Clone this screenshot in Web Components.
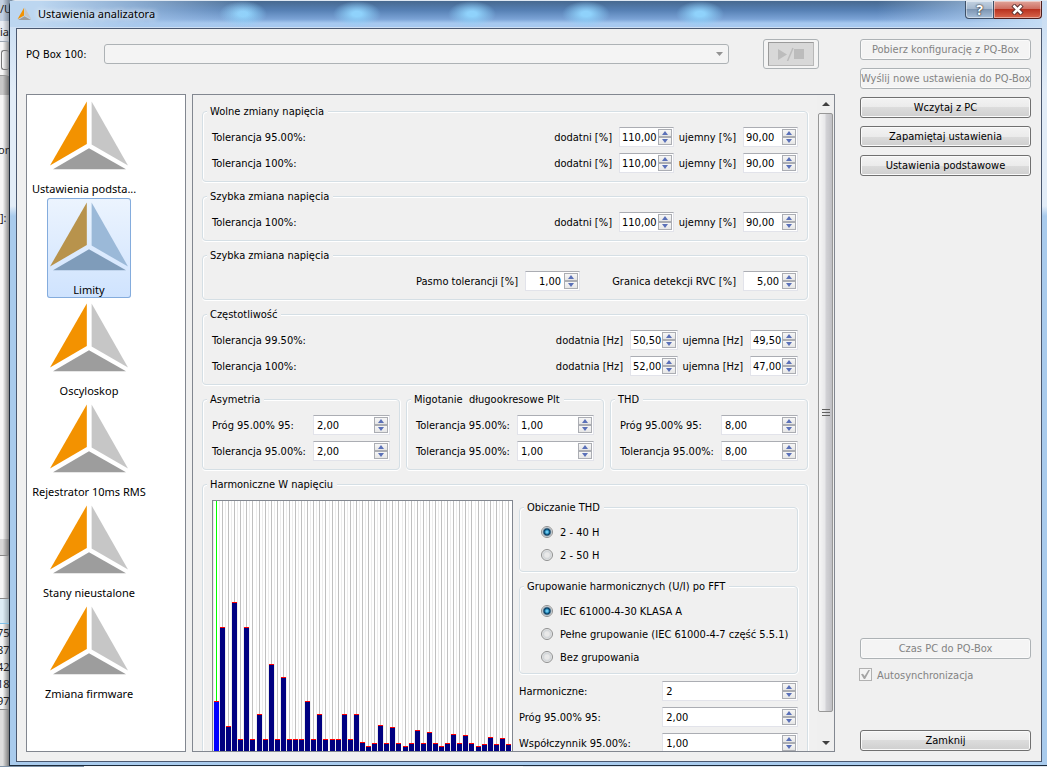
<!DOCTYPE html>
<html lang="pl">
<head>
<meta charset="utf-8">
<title>Ustawienia analizatora</title>
<style>
  html, body { margin: 0; height: 100%; }
  body {
    --ui: "DejaVu Sans Condensed", "DejaVu Sans", sans-serif;
    --shell: "Noto Sans", "Open Sans", sans-serif;
    --face: #f0f0f0;
    font: 11px/14px var(--ui);
    color: #000;
    background: #fff;
    overflow: hidden;
  }
</style>
</head>
<body>
<analyzer-desktop></analyzer-desktop>

<script>
const define = (name, html, setup) => {
  const template = document.createElement('template');
  template.innerHTML = html;
  customElements.define(name, class extends HTMLElement {
    constructor() {
      super();
      this.attachShadow({ mode: 'open' }).append(template.content.cloneNode(true));
    }
    connectedCallback() {
      if (setup && !this.ready) { this.ready = true; setup(this, this.shadowRoot); }
    }
  });
};

/* Three-part triangle used as program logo and page icon */
define('brand-mark', `
<style>
  :host { display: block; }
  svg { display: block; width: 100%; height: auto; }
</style>
<svg viewBox="0 0 84 76" aria-hidden="true">
  <path fill="var(--mark-a, #f39200)" d="M39.8 4.5V47L3 68.5z"/>
  <path fill="var(--mark-b, #c6c6c6)" d="M44.6 4.5V47.6L81 68.5z"/>
  <path fill="var(--mark-c, #9d9d9d)" d="M42 51.3L6 72.2H79z"/>
</svg>`);

define('push-button', `
<style>
  :host { display: block; }
  button {
    display: block; width: 100%; height: 21px; padding: 0; box-sizing: border-box;
    font: inherit; line-height: 19px; color: #000; white-space: nowrap;
    border: 1px solid #707070; border-radius: 3px;
    background: linear-gradient(#f3f3f3, #ebebeb 50%, #dcdcdc 50%, #cfcfcf);
    box-shadow: inset 0 0 0 1px #fafafa;
  }
  button:disabled { color: #838383; border-color: #adb2b5; background: #f4f4f4; }
</style>
<button type="button"><slot></slot></button>`, (el, root) => {
  root.querySelector('button').disabled = el.hasAttribute('disabled');
});

/* Label plus numeric box with up and down arrows */
define('spin-field', `
<style>
  :host {
    display: grid; align-items: center; column-gap: 7px;
    grid-template-columns: var(--label-width, auto) var(--box-width, 55px);
  }
  label { padding-top: 2px; white-space: nowrap; text-align: right; justify-self: end; }
  :host([wide]) { grid-template-columns: 1fr var(--box-width, 77px); column-gap: 0; }
  :host([wide]) label { justify-self: start; }
  .box {
    display: flex; box-sizing: border-box; height: 20px; padding: 1px; background: #fff;
    border: 1px solid #e2e3ea; border-top-color: #abadb3;
  }
  input {
    flex: 1; min-width: 0; width: 0; border: 0; padding: 2px 0 0 1px; background: none;
    font: inherit; color: inherit; outline: 0;
  }
  :host([wide]) input { padding-left: 2px; }
  :host([end]) input { text-align: right; padding-right: 3px; }
  .arrows { display: grid; grid-template-rows: 8px 8px; width: 14px; background: #fff; }
  button {
    display: grid; place-items: center; padding: 0; border: 1px solid #abadb3;
    background: linear-gradient(#f6f6f6, #e6e6e6);
  }
  svg { display: block; fill: #5a70b8; }
</style>
<label for="value"></label>
<span class="box">
  <input id="value" type="text" inputmode="decimal" autocomplete="off">
  <span class="arrows">
    <button type="button" tabindex="-1" aria-label="+"><svg width="6" height="4"><path d="M0 4L3 0L6 4z"/></svg></button>
    <button type="button" tabindex="-1" aria-label="-"><svg width="6" height="4"><path d="M0 0H6L3 4z"/></svg></button>
  </span>
</span>`, (el, root) => {
  const input = root.querySelector('input');
  root.querySelector('label').textContent = el.getAttribute('label');
  input.value = el.getAttribute('value');
  root.querySelectorAll('button').forEach((button, i) => button.addEventListener('click', () => {
    const digits = (input.value.split(',')[1] || '').length;
    const next = parseFloat(input.value.replace(',', '.')) + (i ? -1 : 1);
    input.value = next.toFixed(digits).replace('.', ',');
  }));
});

/* Etched frame with a caption */
define('group-box', `
<style>
  :host { display: block; }
  fieldset {
    margin: 0; min-width: 0; padding: 9px 9px 8px 9px; border: 1px solid #d5dfe5;
    border-radius: 4px; box-shadow: inset 1px 1px #fff, 0 1px #fff, 1px 0 #fff; margin-bottom: 1px;
  }
  legend {
    height: 14px; margin-left: -5px; padding: 0 4px 0 3px; background: var(--face);
    line-height: 16px; white-space: pre;
  }
  .rows { display: grid; row-gap: 6px; }
</style>
<fieldset><legend></legend><div class="rows"><slot></slot></div></fieldset>`, (el, root) => {
  root.querySelector('legend').textContent = el.getAttribute('caption');
});

/* One line of a group: name on the left, value fields on the right */
define('limit-row', `
<style>
  :host { display: flex; align-items: center; gap: 7px; height: 20px; }
  span { flex: 1; padding-top: 2px; }
</style>
<span></span><slot></slot>`, (el, root) => {
  root.querySelector('span').textContent = el.getAttribute('name') || '';
});

define('radio-set', `
<style>
  :host { display: grid; row-gap: 6px; padding-left: 12px; }
  label { display: flex; align-items: center; gap: 7px; height: 17px; white-space: nowrap; }
  span { padding-top: 2px; }
  input {
    appearance: none; flex: none; box-sizing: border-box; width: 12px; height: 12px; margin: 0;
    border: 1px solid #8e8f8f; border-radius: 50%;
    background: radial-gradient(circle, #e9e9e9 0 2px, #cfd3d6 4px, #f4f4f4 5px);
  }
  input:checked {
    background: radial-gradient(circle at 50% 50%, #6cc8ee 0 1px, #1b7fb0 2px, #0b3a5c 3px, #f4f4f4 5px);
  }
</style>`, (el, root) => {
  el.getAttribute('options').split('|').forEach((text, i) => {
    const label = document.createElement('label');
    const input = document.createElement('input');
    const caption = document.createElement('span');
    input.type = 'radio';
    input.name = 'choice';
    input.defaultChecked = i === 0;
    caption.textContent = text;
    label.append(input, caption);
    root.append(label);
  });
});

/* Bars of the harmonic limits, order 2 to 50 */
define('harmonic-chart', `
<style>
  :host { display: block; box-sizing: border-box; border: 1px solid #828790; background: #fff; overflow: hidden; }
  svg { display: block; }
</style>
<svg width="299" height="251" role="img" aria-label="Harmoniczne" shape-rendering="crispEdges"></svg>`, (el, root) => {
  const levels = [51, 125, 26, 150, 13, 125, 13, 38, 13, 88, 13, 75, 13, 13, 13, 51, 13, 38, 13, 13, 13, 38,
    13, 38, 10, 6, 9, 27, 9, 25, 9, 6, 9, 22, 9, 20, 9, 6, 9, 18, 9, 17, 9, 6, 8, 15, 8, 14, 8];
  const rect = (x, y, w, h, fill) => `<rect x="${x}" y="${y}" width="${w}" height="${h}" fill="${fill}"/>`;
  root.querySelector('svg').innerHTML = levels.map((level, i) => {
    const x = 1 + 6 * i + Math.floor((i + 5) / 12);
    const top = 251 - level;
    return rect(x - 1, 0, 1, 251, '#ececec')
      + rect(x + 2, 0, 1, top, i ? '#c0c0c0' : '#00ff00')
      + rect(x, top, 5, level, i ? '#000080' : '#0000ff')
      + rect(x, top, 5, 1, '#ff0000');
  }).join('');
});

define('page-list', `
<style>
  :host {
    display: block; box-sizing: border-box; padding: 2px 0; background: #fff;
    border: 1px solid #828790; font: 11px/16px var(--shell);
  }
  nav { display: grid; width: 124px; row-gap: 1px; }
  button {
    display: grid; grid-template-columns: 84px; justify-content: center; align-content: start;
    height: 100px; padding: 0; border: 0; background: none; font: inherit; color: inherit;
  }
  .tile {
    display: grid; grid-template: 84px 16px / 114px; box-sizing: border-box; height: 100px;
    justify-content: center; border-radius: 3px;
  }
  brand-mark { width: 84px; justify-self: center; }
  .name { white-space: nowrap; text-align: center; }
  .cut { text-align: left; }
  [aria-current] .tile {
    background: linear-gradient(#ecf4fe, #cfe3fe);
    box-shadow: inset 0 0 0 1px #84acdd;
    --mark-a: #b8934c; --mark-b: #9bb9d8; --mark-c: #7f9cba;
  }
</style>
<nav></nav>`, (el, root) => {
  const names = ['Ustawienia podsta...', 'Limity', 'Oscyloskop', 'Rejestrator 10ms RMS', 'Stany nieustalone', 'Zmiana firmware'];
  root.querySelector('nav').innerHTML = names.map((name, i) => `
    <button type="button"${i === 1 ? ' aria-current="page"' : ''}>
      <span class="tile"><brand-mark></brand-mark><span class="name${name.endsWith('...') ? ' cut' : ''}">${name}</span></span>
    </button>`).join('');
});

define('scroll-bar', `
<style>
  :host { display: grid; grid-template-rows: 17px 1fr 17px; width: 17px; background: #efefef; }
  .end { display: grid; place-items: center; }
  .track { display: grid; grid-template-rows: 601fr 16fr; padding: 1px 0 6px 1px; }
  .thumb {
    display: grid; place-items: center; box-sizing: border-box; width: 15px;
    border: 1px solid #979797; border-radius: 2px;
    background: linear-gradient(90deg, #f6f6f6, #e8e8ea 45%, #d2d2d6 55%, #c0c0c4);
  }
  svg { display: block; }
</style>
<span class="end"><svg width="8" height="4"><path fill="#404040" d="M0 4L4 0L8 4z"/></svg></span>
<span class="track"><span class="thumb"><svg width="8" height="9" shape-rendering="crispEdges"><path stroke="#606060" d="M0 1.500H8M0 4.500H8M0 7.500H8"/></svg></span></span>
<span class="end"><svg width="8" height="4"><path fill="#404040" d="M0 0H8L4 4z"/></svg></span>`);

define('limits-page', `
<style>
  :host {
    display: grid; grid-template-columns: 1fr auto; grid-template-rows: minmax(0, 1fr); box-sizing: border-box;
    border: 1px solid #828790; background: var(--face); min-height: 0; min-width: 0;
  }
  .view { overflow: auto; scrollbar-width: none; min-height: 0; }
  .stack { display: grid; row-gap: 6px; padding: 9px; }
  .thirds { display: grid; grid-template-columns: repeat(3, minmax(0, 1fr)); column-gap: 6px; }
  .split { display: grid; grid-template-columns: 301px minmax(0, 1fr); column-gap: 6px; }
  .options { display: grid; row-gap: 6px; align-content: start; }
  .options spin-field { --box-width: 136px; }
  .second { --label-width: 55px; }
  .rvc { --label-width: 149px; }
  .hz { --box-width: 48px; }
  .hz.second { --label-width: 58px; }
</style>
<div class="view">
  <div class="stack">
    <group-box caption="Wolne zmiany napięcia">
      <limit-row name="Tolerancja 95.00%:">
        <spin-field label="dodatni [%]" value="110,00"></spin-field>
        <spin-field class="second" label="ujemny [%]" value="90,00"></spin-field>
      </limit-row>
      <limit-row name="Tolerancja 100%:">
        <spin-field label="dodatni [%]" value="110,00"></spin-field>
        <spin-field class="second" label="ujemny [%]" value="90,00"></spin-field>
      </limit-row>
    </group-box>
    <group-box caption="Szybka zmiana napięcia">
      <limit-row name="Tolerancja 100%:">
        <spin-field label="dodatni [%]" value="110,00"></spin-field>
        <spin-field class="second" label="ujemny [%]" value="90,00"></spin-field>
      </limit-row>
    </group-box>
    <group-box caption="Szybka zmiana napięcia">
      <limit-row>
        <spin-field end label="Pasmo tolerancji [%]" value="1,00"></spin-field>
        <spin-field end class="rvc" label="Granica detekcji RVC [%]" value="5,00"></spin-field>
      </limit-row>
    </group-box>
    <group-box caption="Częstotliwość">
      <limit-row name="Tolerancja 99.50%:">
        <spin-field class="hz" label="dodatnia [Hz]" value="50,50"></spin-field>
        <spin-field class="hz second" label="ujemna [Hz]" value="49,50"></spin-field>
      </limit-row>
      <limit-row name="Tolerancja 100%:">
        <spin-field class="hz" label="dodatnia [Hz]" value="52,00"></spin-field>
        <spin-field class="hz second" label="ujemna [Hz]" value="47,00"></spin-field>
      </limit-row>
    </group-box>
    <div class="thirds">
      <group-box caption="Asymetria">
        <spin-field wide label="Próg 95.00% 95:" value="2,00"></spin-field>
        <spin-field wide label="Tolerancja 95.00%:" value="2,00"></spin-field>
      </group-box>
      <group-box caption="Migotanie  długookresowe Plt">
        <spin-field wide label="Tolerancja 95.00%:" value="1,00"></spin-field>
        <spin-field wide label="Tolerancja 95.00%:" value="1,00"></spin-field>
      </group-box>
      <group-box caption="THD">
        <spin-field wide label="Próg 95.00% 95:" value="8,00"></spin-field>
        <spin-field wide label="Tolerancja 95.00%:" value="8,00"></spin-field>
      </group-box>
    </div>
    <group-box caption="Harmoniczne W napięciu">
      <div class="split">
        <harmonic-chart></harmonic-chart>
        <div class="options">
          <group-box caption="Obiczanie THD">
            <radio-set options="2 - 40 H|2 - 50 H"></radio-set>
          </group-box>
          <group-box caption="Grupowanie harmonicznych (U/I) po FFT">
            <radio-set options="IEC 61000-4-30 KLASA A|Pełne grupowanie (IEC 61000-4-7 część 5.5.1)|Bez grupowania"></radio-set>
          </group-box>
          <spin-field wide label="Harmoniczne:" value="2"></spin-field>
          <spin-field wide label="Próg 95.00% 95:" value="2,00"></spin-field>
          <spin-field wide label="Współczynnik 95.00%:" value="1,00"></spin-field>
        </div>
      </div>
    </group-box>
  </div>
</div>
<scroll-bar></scroll-bar>`);

define('device-bar', `
<style>
  :host { display: flex; align-items: center; height: 30px; padding-right: 16px; }
  label { flex: none; width: 78px; padding-top: 2px; }
  .combo { flex: 1; display: grid; margin-right: 34px; align-items: center; }
  .combo > * { grid-area: 1 / 1; }
  select {
    appearance: none; width: 100%; height: 20px; box-sizing: border-box; font: inherit;
    border: 1px solid #adb2b5; border-radius: 3px; background: #f4f4f4; opacity: 1;
  }
  svg { display: block; }
  .combo svg { justify-self: end; margin-right: 6px; }
  button {
    display: grid; width: 56px; height: 30px; box-sizing: border-box; padding: 2px 4px;
    border: 1px solid #adb2b5; border-radius: 3px; background: #f4f4f4;
  }
  .face {
    display: grid; place-items: center; height: 24px; box-sizing: border-box;
    border: 1px solid; border-color: #9a9a9a #b8b8b8 #b8b8b8 #9a9a9a; background: #d8d8d8;
  }
</style>
<label for="device">PQ Box 100:</label>
<span class="combo">
  <select id="device" disabled></select>
  <svg width="7" height="4" aria-hidden="true"><path fill="#939393" d="M0 0H7L3.500 4z"/></svg>
</span>
<button type="button" disabled aria-label="Start / stop"><span class="face">
  <svg width="28" height="14"><path fill="#bcbcbc" d="M1 2L10 7.500L1 13zM17 2H27V12H17z"/><path stroke="#bcbcbc" stroke-width="1.500" d="M10.500 14L16 1"/></svg>
</span></button>`);

define('action-column', `
<style>
  :host { display: flex; flex-direction: column; gap: 8px; padding-bottom: 1px; }
  .clock { margin-top: auto; }
  label { display: flex; align-items: center; gap: 5px; height: 15px; margin-left: -1px; color: #838383; }
  span { padding-top: 2px; }
  input {
    appearance: none; display: grid; place-items: center; box-sizing: border-box;
    width: 13px; height: 13px; margin: 0; border: 1px solid #b1b1b1; background: #f4f4f4;
  }
  input:checked::before {
    content: ""; width: 9px; height: 9px; background: #a5a5a5;
    clip-path: polygon(0 48%, 22% 42%, 40% 68%, 82% 0, 100% 0, 46% 100%, 32% 100%);
  }
  .close { margin-top: 40px; }
</style>
<push-button disabled>Pobierz konfigurację z PQ-Box</push-button>
<push-button disabled>Wyślij nowe ustawienia do PQ-Box</push-button>
<push-button>Wczytaj z PC</push-button>
<push-button>Zapamiętaj ustawienia</push-button>
<push-button>Ustawienia podstawowe</push-button>
<push-button class="clock" disabled>Czas PC do PQ-Box</push-button>
<label><input type="checkbox" checked disabled><span>Autosynchronizacja</span></label>
<push-button class="close">Zamknij</push-button>`);

define('title-bar', `
<style>
  :host {
    display: flex; align-items: flex-start; height: 27px; box-sizing: border-box;
    border-bottom: 1px solid #cfe0f4; font: 11px/16px var(--shell);
    background:
      linear-gradient(90deg, #bcd6f0 0 3%, #a9c8eab0 12%, #a9c8ea00 24%, #a9c8ea00 84%, #b4d0ee90 93%, #c4dcf4),
      radial-gradient(ellipse 24px 13px at 233px 13px, #8fd2fb 20%, #8fd2fb00),
      radial-gradient(ellipse 24px 13px at 347px 13px, #8fd2fb 20%, #8fd2fb00),
      radial-gradient(ellipse 24px 13px at 462px 13px, #8fd2fb 20%, #8fd2fb00),
      radial-gradient(ellipse 24px 13px at 576px 13px, #8fd2fb 20%, #8fd2fb00),
      radial-gradient(ellipse 24px 13px at 690px 13px, #8fd2fb 20%, #8fd2fb00),
      linear-gradient(#47698f, #5680b4 35%, #7ba3d6 70%, #a6c8ef 85%, #a6c8ef);
  }
  brand-mark { width: 15px; margin: 6px 6px 0 7px; }
  h1 { flex: 1; margin: 5px 0 0; font: inherit; text-shadow: 0 0 6px #fff, 0 0 6px #fff; white-space: nowrap; }
  button {
    display: grid; place-items: center; height: 18px; padding: 0; box-sizing: border-box;
    border: 1px solid #3e5068; border-top: 0; box-shadow: inset 0 0 0 1px #ffffff70;
    font: bold 14px/16px var(--shell); color: #fff; text-shadow: 0 0 1px #222, 0 0 2px #222;
  }
  .help { width: 29px; border-radius: 0 0 0 4px; background: linear-gradient(#c3d2e2, #a5b8ce 45%, #7e96b3 50%, #a8c0da); }
  .exit { width: 48px; border-left: 0; border-radius: 0 0 4px 0; border-color: #4d1d1c; background: linear-gradient(#e0a59b, #cf6f62 45%, #b9321f 50%, #d9664c); }
  svg { display: block; }
</style>
<brand-mark></brand-mark>
<h1>Ustawienia analizatora</h1>
<button class="help" type="button">?</button>
<button class="exit" type="button" aria-label="Zamknij okno"><svg width="13" height="11"><path stroke="#5a3030" stroke-width="4.500" d="M2 1L11 10M11 1L2 10"/><path stroke="#fff" stroke-width="2.500" d="M2.500 1.500L10.500 9.500M10.500 1.500L2.500 9.500"/></svg></button>`);

define('settings-window', `
<style>
  :host {
    display: grid; grid-template-rows: auto minmax(0, 1fr); box-sizing: border-box; min-width: 0;
    padding: 0 5px 3px 6px; border: 1px solid #1c2a3a; border-top-color: #dfe8f2; border-right: 0;
    border-radius: 6px 0 0 0;
    background: linear-gradient(#c5dbf2, #e2ecf7 90px, #e2ecf7 205px, #a9cbed 215px);
  }
  title-bar { margin: 0 0 0 -6px; }
  .client {
    display: grid; grid-template-columns: minmax(0, 1fr) 171px; column-gap: 25px; min-height: 0;
    box-sizing: border-box; padding: 10px 10px 9px 9px; background: var(--face); border: 1px solid #4a5870;
  }
  .main { display: grid; grid-template-rows: 30px minmax(0, 1fr); row-gap: 25px; min-height: 0; }
  .pages { display: grid; grid-template-columns: 160px minmax(0, 1fr); column-gap: 6px; min-height: 0; }
</style>
<title-bar></title-bar>
<div class="client">
  <div class="main">
    <device-bar></device-bar>
    <div class="pages">
      <page-list></page-list>
      <limits-page></limits-page>
    </div>
  </div>
  <action-column></action-column>
</div>`);

/* Sliver of the main program window left uncovered by the dialog */
define('backdrop-strip', `
<style>
  :host {
    display: flex; flex-direction: column; width: 9px; overflow: hidden;
    font: 11px/17px var(--shell); white-space: nowrap; color: #222;
    background: linear-gradient(90deg, #00000000 30%, #00000070), #f6f6f6;
  }
  div { flex: none; box-sizing: border-box; }
  .title { height: 21px; background: #6f93bd60; }
  .menu { height: 21px; padding-top: 2px; background: #d5e0f060; border-bottom: 1px solid #9aa4b0; }
  .tools { height: 33px; }
  .icon { height: 20px; margin: 8px 0 0 1px; border: 1px solid #777; border-right: 0; border-radius: 3px; }
  .band { height: 20px; background: #00000030; border-top: 1px solid #999; }
  .one { height: 114px; padding-top: 46px; text-indent: -2px; }
  .two { height: 330px; }
  .head { height: 17px; background: #00000020; border-bottom: 1px solid #888; }
  .pad { height: 43px; border-bottom: 1px solid #888; }
  .pick { height: 25px; background: #b5e0f860; border-bottom: 1px solid #7fc0e8; }
  .cell { text-indent: -3px; }
  .foot { flex: 1; border-top: 1px solid #888; background: #00000018; }
</style>
<div class="title">/U</div><div class="menu">ia</div>
<div class="tools"><div class="icon"></div></div><div class="band"></div>
<div class="one">onc</div><div class="two">]:</div>
<div class="head"></div><div class="pad"></div><div class="pick"></div>
<div class="cell">757</div><div class="cell">878</div><div class="cell">427</div><div class="cell">183</div><div class="cell">973</div>
<div class="foot"></div>`);

define('analyzer-desktop', `
<style>
  :host {
    display: grid; grid-template-columns: 9px minmax(0, 1fr); grid-template-rows: minmax(0, 1fr);
    box-sizing: border-box; height: 100vh; padding-bottom: 1px;
    background: linear-gradient(90deg, #7f93a8 0 8%, #f4f6f8 8% 50%, #dfe6ee 50%);
  }
</style>
<backdrop-strip></backdrop-strip>
<settings-window></settings-window>`);
</script>
</body>
</html>
